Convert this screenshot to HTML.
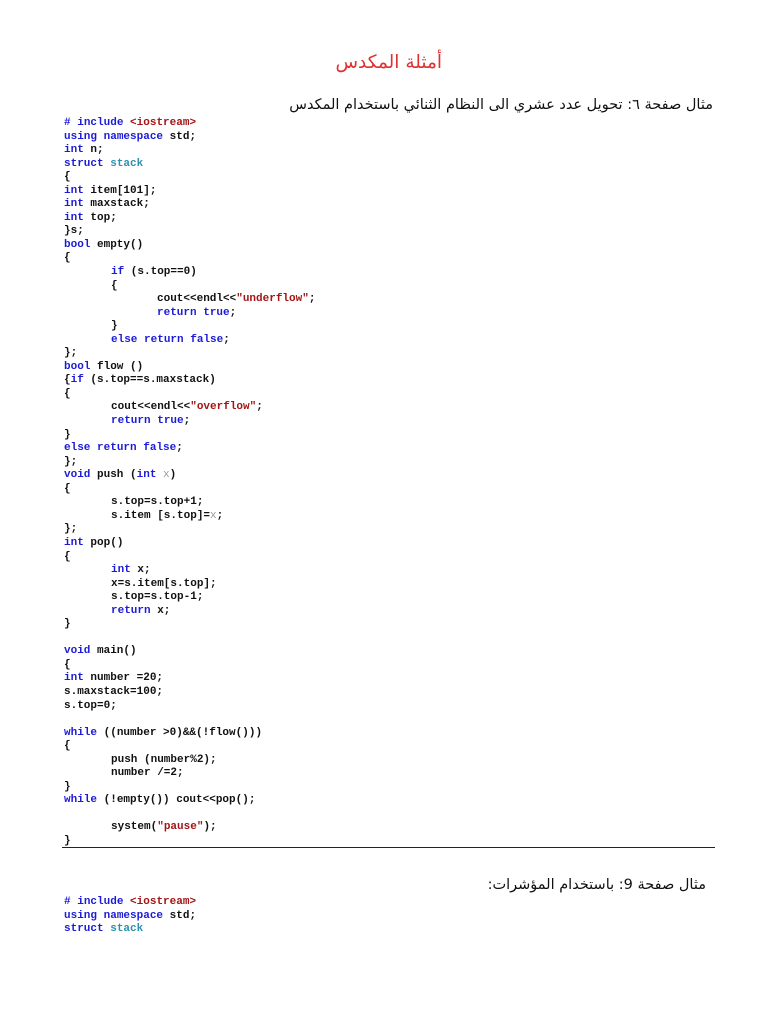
<!DOCTYPE html>
<html><head><meta charset="utf-8"><style>
html,body{margin:0;padding:0;background:#fff;width:768px;height:1024px;overflow:hidden;position:relative}
.ar{position:absolute;font-family:"DejaVu Sans","Noto Sans CJK SC",sans-serif;direction:rtl;white-space:nowrap}
pre{position:absolute;left:64px;margin:0;font-family:"Liberation Mono",monospace;font-weight:bold;font-size:11px;line-height:13.55px;color:#111}
.k{color:#1c1cd8}.s{color:#a31515}.t{color:#2b91af}.g{color:#999;font-weight:normal}
.i{padding-left:47px}.i2{padding-left:93px}
</style></head><body>
<div class="ar" style="right:326px;top:52px;font-size:18.5px;color:#e03030">أمثلة  المكدس</div>
<div class="ar" style="right:55px;top:97px;font-size:14.5px;color:#111">مثال صفحة ٦: تحويل عدد عشري الى النظام الثنائي باستخدام المكدس</div>
<pre style="top:117px"><span class="k">#</span> <span class="k">include</span> <span class="s">&lt;iostream&gt;</span>
<span class="k">using</span> <span class="k">namespace</span> std;
<span class="k">int</span> n;
<span class="k">struct</span> <span class="t">stack</span>
{
<span class="k">int</span> item[101];
<span class="k">int</span> maxstack;
<span class="k">int</span> top;
}s;
<span class="k">bool</span> empty()
{
<span class="i"><span class="k">if</span> (s.top==0)</span>
<span class="i">{</span>
<span class="i2">cout&lt;&lt;endl&lt;&lt;<span class="s">"underflow"</span>;</span>
<span class="i2"><span class="k">return</span> <span class="k">true</span>;</span>
<span class="i">}</span>
<span class="i"><span class="k">else</span> <span class="k">return</span> <span class="k">false</span>;</span>
};
<span class="k">bool</span> flow ()
{<span class="k">if</span> (s.top==s.maxstack)
{
<span class="i">cout&lt;&lt;endl&lt;&lt;<span class="s">"overflow"</span>;</span>
<span class="i"><span class="k">return</span> <span class="k">true</span>;</span>
}
<span class="k">else</span> <span class="k">return</span> <span class="k">false</span>;
};
<span class="k">void</span> push (<span class="k">int</span> <span class="g">x</span>)
{
<span class="i">s.top=s.top+1;</span>
<span class="i">s.item [s.top]=<span class="g">x</span>;</span>
};
<span class="k">int</span> pop()
{
<span class="i"><span class="k">int</span> x;</span>
<span class="i">x=s.item[s.top];</span>
<span class="i">s.top=s.top-1;</span>
<span class="i"><span class="k">return</span> x;</span>
}

<span class="k">void</span> main()
{
<span class="k">int</span> number =20;
s.maxstack=100;
s.top=0;

<span class="k">while</span> ((number &gt;0)&amp;&amp;(!flow()))
{
<span class="i">push (number%2);</span>
<span class="i">number /=2;</span>
}
<span class="k">while</span> (!empty()) cout&lt;&lt;pop();

<span class="i">system(<span class="s">"pause"</span>);</span>
}</pre>
<div style="position:absolute;left:62px;top:847px;width:653px;height:1px;background:#222"></div>
<div class="ar" style="right:62px;top:877px;font-size:14.5px;color:#111">مثال صفحة 9:  باستخدام المؤشرات:</div>
<pre style="top:896px"><span class="k">#</span> <span class="k">include</span> <span class="s">&lt;iostream&gt;</span>
<span class="k">using</span> <span class="k">namespace</span> std;
<span class="k">struct</span> <span class="t">stack</span></pre>
</body></html>
